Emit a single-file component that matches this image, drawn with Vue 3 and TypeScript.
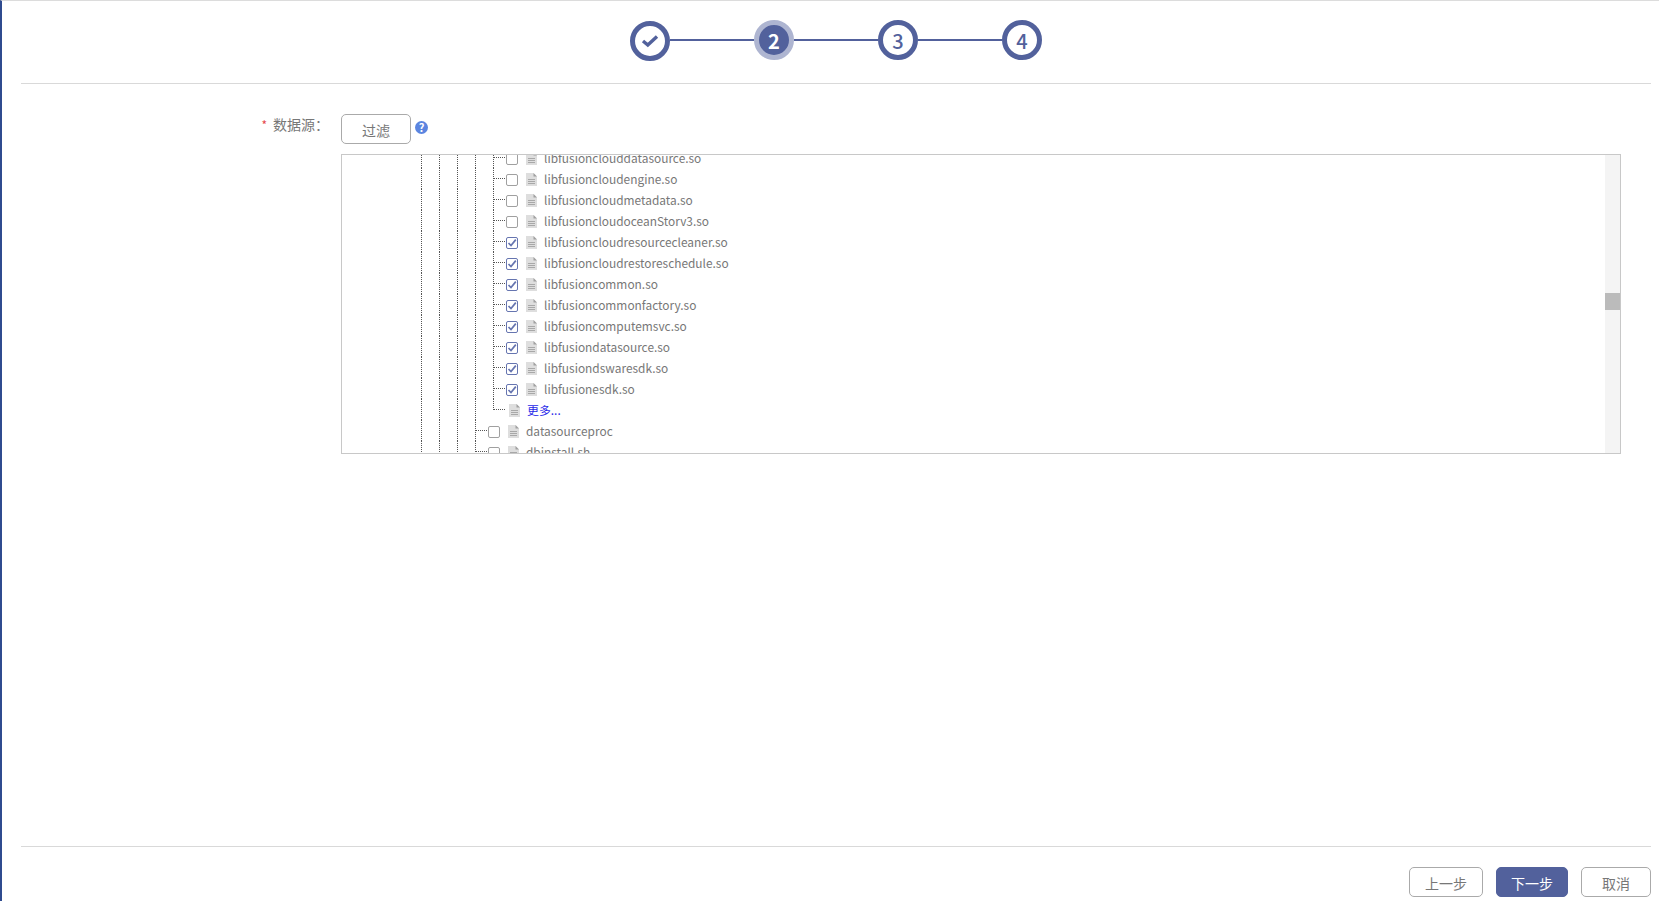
<script setup lang="ts">
interface Row { depth: number; text: string; state: 'on' | 'off' | 'more' }
const children: [string, boolean][] = [
  ['libfusionclouddatasource.so', false],
  ['libfusioncloudengine.so', false],
  ['libfusioncloudmetadata.so', false],
  ['libfusioncloudoceanStorv3.so', false],
  ['libfusioncloudresourcecleaner.so', true],
  ['libfusioncloudrestoreschedule.so', true],
  ['libfusioncommon.so', true],
  ['libfusioncommonfactory.so', true],
  ['libfusioncomputemsvc.so', true],
  ['libfusiondatasource.so', true],
  ['libfusiondswaresdk.so', true],
  ['libfusionesdk.so', true]
]
const rows: Row[] = [
  ...children.map(([text, on]): Row => ({ depth: 5, text, state: on ? 'on' : 'off' })),
  { depth: 5, text: '更多...', state: 'more' },
  { depth: 4, text: 'datasourceproc', state: 'off' },
  { depth: 4, text: 'dbinstall.sh', state: 'off' }
]
const steps = ['', '2', '3', '4']
</script>

<template>
  <div class="page">
    <header class="stepper">
      <template v-for="(s, i) in steps" :key="i">
        <div v-if="i > 0" class="link"></div>
        <div class="step" :class="{ done: i === 0, active: i === 1 }">
          <svg v-if="i === 0" width="18" height="14" viewBox="0 0 18 14">
            <path d="M2 7 L6.8 11 L16 2.5" fill="none" stroke="#52619c" stroke-width="3.4" />
          </svg>
          <template v-else>{{ s }}</template>
        </div>
      </template>
    </header>

    <main class="form">
      <div class="field">
        <div class="label"><span class="star">*</span>数据源：</div>
        <div class="control">
          <div class="filter">
            <button class="btn filter-btn">过滤</button>
            <span class="help">?</span>
          </div>
          <div class="tree">
            <div class="tree-inner">
              <div v-for="r in rows" :key="r.text" class="row" :class="{ last: r.state === 'more' }">
                <span v-for="g in r.depth - 1" :key="g" class="guide"></span>
                <span class="switch"><i class="dash"></i></span>
                <span v-if="r.state !== 'more'" class="check" :class="{ on: r.state === 'on' }">
                  <svg v-if="r.state === 'on'" width="10" height="10" viewBox="0 0 10 10">
                    <path d="M1.5 5 L4 7.5 L8.8 1.6" fill="none" stroke="#6675b0" stroke-width="1.7" />
                  </svg>
                </span>
                <svg class="file" :class="{ more: r.state === 'more' }" width="11" height="13" viewBox="0 0 11 13">
                  <path d="M0 0 H7.5 L11 3.5 V13 H0 Z" fill="#dedede" />
                  <path d="M7.5 0 L11 3.5 H7.5 Z" fill="#a0a0a0" />
                  <path d="M2 6.5 H9 M2 8.5 H9 M2 10.5 H9" stroke="#a8a8a8" stroke-width="1" />
                </svg>
                <span class="name" :class="{ link2: r.state === 'more' }">{{ r.text }}</span>
              </div>
            </div>
            <div class="scrollbar"><div class="thumb"></div></div>
          </div>
        </div>
      </div>
    </main>

    <footer class="footer">
      <button class="btn prev">上一步</button>
      <button class="btn next">下一步</button>
      <button class="btn cancel">取消</button>
    </footer>
  </div>
</template>

<style>
html, body { margin: 0; overflow: hidden; background: #fff; }
</style>

<style scoped>
.page {
  height: 901px;
  box-sizing: border-box;
  border-left: 2px solid #2f4b8f;
  border-top: 1px solid #dcdcdc;
  padding: 0 8px 0 19px;
  display: flex;
  flex-direction: column;
  font-family: "Noto Sans CJK SC", "Noto Sans", sans-serif;
  color: #777;
}
.stepper {
  height: 83px;
  flex: none;
  box-sizing: border-box;
  border-bottom: 1px solid #d9d9d9;
  padding-top: 19px;
  display: flex;
  justify-content: center;
  align-items: flex-start;
}
.step {
  width: 40px;
  height: 40px;
  box-sizing: border-box;
  border: 5px solid #52619c;
  border-radius: 50%;
  display: flex;
  align-items: center;
  justify-content: center;
  font-size: 20px;
  font-weight: 500;
  color: #52619c;
  background: #fff;
}
.step.done { margin-top: 1px; }
.step.active {
  background: #52619c;
  border-color: #aeb5d1;
  color: #fff;
  font-weight: 700;
}
.link {
  width: 84px;
  height: 2px;
  margin-top: 19px;
  background: #52619c;
}
.form { flex: 1; min-height: 0; padding-top: 30px; }
.field { display: flex; }
.label {
  width: 320px;
  flex: none;
  box-sizing: border-box;
  padding-right: 12px;
  text-align: right;
  font-size: 14px;
  line-height: 20px;
}
.star { color: #e5484d; margin-right: 6px; font-size: 12px; }
.control { width: 1280px; flex: none; }
.filter { display: flex; align-items: center; height: 30px; margin-bottom: 10px; }
.btn {
  box-sizing: border-box;
  height: 30px;
  border: 1px solid #aaa;
  border-radius: 5px;
  background: #fff;
  color: #777;
  font: inherit;
  font-size: 14px;
  padding: 1px 0 0;
  line-height: 20px;
}
.filter-btn { width: 70px; }
.help {
  width: 13px;
  height: 13px;
  margin-left: 4px;
  margin-top: -4px;
  border-radius: 50%;
  background: #5b85e0;
  color: #fff;
  font-size: 11px;
  font-weight: 700;
  line-height: 13px;
  text-align: center;
}
.tree {
  position: relative;
  height: 300px;
  box-sizing: border-box;
  border: 1px solid #c8c8c8;
  overflow: hidden;
}
.tree-inner { margin-top: -8px; padding-left: 79px; }
.row {
  height: 21px;
  display: flex;
  align-items: center;
  font-size: 11.9px;
}
.guide {
  width: 18px;
  height: 21px;
  flex: none;
  box-sizing: border-box;
  border-left: 1px dotted #555;
}
.switch {
  width: 13px;
  height: 21px;
  flex: none;
  box-sizing: border-box;
  border-left: 1px dotted #555;
  display: flex;
  align-items: center;
}
.row.last .switch { height: 11px; align-self: flex-start; align-items: flex-end; }
.dash { width: 11px; border-top: 1px dotted #555; }
.check {
  width: 12px;
  height: 12px;
  flex: none;
  box-sizing: border-box;
  border: 1.5px solid #a0a0a0;
  border-radius: 2px;
  margin: 2px 8px 0 0;
  display: flex;
  align-items: center;
  justify-content: center;
}
.check.on { border-color: #6675b0; }
.file { flex: none; margin: 2px 7px 0 0; }
.file.more { margin-left: 3px; }
.name { color: #777; white-space: nowrap; }
.link2 { color: #2a2ae8; }
.scrollbar {
  position: absolute;
  top: 0;
  right: 0;
  bottom: 0;
  width: 15px;
  background: #f4f4f4;
}
.thumb { height: 17px; margin-top: 138px; background: #bbb; }
.footer {
  flex: none;
  height: 55px;
  box-sizing: border-box;
  border-top: 1px solid #d9d9d9;
  padding-top: 20px;
  display: flex;
  justify-content: flex-end;
}
.prev { width: 74px; }
.next {
  width: 72px;
  margin-left: 13px;
  background: #52619c;
  border-color: #52619c;
  color: #fff;
}
.cancel { width: 70px; margin-left: 13px; }
</style>
